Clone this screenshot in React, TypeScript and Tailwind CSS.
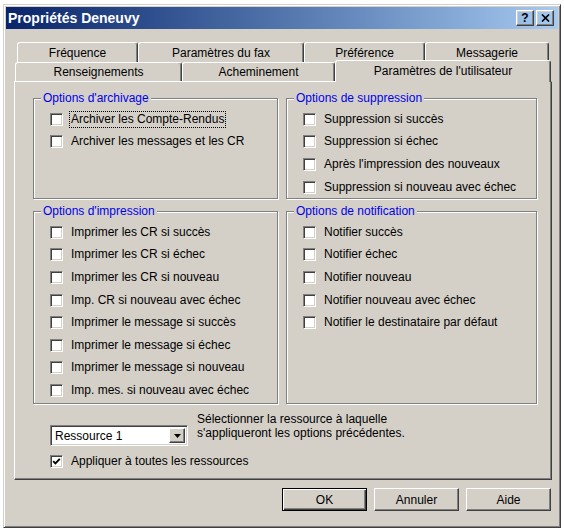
import React from 'react';

const raised =
  'border border-t-white border-l-white border-r-[#404040] border-b-[#404040] shadow-[inset_-1px_-1px_0_#808080,inset_1px_1px_0_#d4d0c8]';

function Box({ checked }: { checked?: boolean }) {
  return (
    <span className="w-[13px] h-[13px] shrink-0 bg-white border border-t-[#808080] border-l-[#808080] border-r-white border-b-white shadow-[inset_1px_1px_0_#404040,inset_-1px_-1px_0_#d4d0c8] flex items-center justify-center">
      {checked && (
        <svg width="9" height="9" viewBox="0 0 9 9">
          <path d="M1.2 4.2 L3.4 6.4 L7.8 1.8" fill="none" stroke="#000" strokeWidth="1.9" />
        </svg>
      )}
    </span>
  );
}

function Check({ label, checked, focus }: { label: string; checked?: boolean; focus?: boolean }) {
  return (
    <div className="h-[22.6px] flex items-center">
      <Box checked={checked} />
      <span
        className={
          'ml-[7px] px-[1px] leading-[15px] ' + (focus ? 'outline outline-1 outline-dotted outline-black' : '')
        }
      >
        {label}
      </span>
    </div>
  );
}

function Group({ title, className, children }: { title: string; className: string; children: React.ReactNode }) {
  return (
    <div
      className={
        'relative border border-[#808080] shadow-[inset_1px_1px_0_#fff,1px_1px_0_#fff] pl-[16px] pt-[9px] ' + className
      }
    >
      <span className="absolute left-[7px] top-[-8px] px-[2px] bg-[#d4d0c8] text-[#0000ee] leading-[14px]">
        {title}
      </span>
      {children}
    </div>
  );
}

function Tab({ label, width, className = '' }: { label: string; width: string; className?: string }) {
  return (
    <div
      className={
        'flex items-center justify-center bg-[#d4d0c8] border-t border-l border-r border-t-white border-l-white border-r-[#404040] shadow-[inset_-1px_0_0_#808080] rounded-t-[3px] ' +
        width +
        ' ' +
        className
      }
    >
      {label}
    </div>
  );
}

function Button({ label, isDefault }: { label: string; isDefault?: boolean }) {
  return (
    <div
      className={
        'w-[85px] h-[23px] flex items-center justify-center ' +
        (isDefault
          ? 'border border-black shadow-[inset_1px_1px_0_#fff,inset_-1px_-1px_0_#404040,inset_-2px_-2px_0_#808080]'
          : raised)
      }
    >
      {label}
    </div>
  );
}

export default function App() {
  return (
    <div className="w-[564px] h-[529px] bg-white pt-[4px] pl-[3px] font-['Liberation_Sans',Arial,sans-serif] text-[12px] text-black">
      <div className="w-[558px] h-[524px] bg-[#d4d0c8] border border-t-[#d4d0c8] border-l-[#d4d0c8] border-r-[#404040] border-b-[#404040] shadow-[inset_1px_1px_0_#fff,inset_-1px_-1px_0_#808080] p-[2px]">
        {/* title bar */}
        <div className="h-[22px] flex items-center bg-linear-to-r from-[#0a246a] to-[#a6caf0] pl-[2px] pr-[4px]">
          <span className="text-white font-bold text-[14px] leading-none">Propriétés Deneuvy</span>
          <div className="ml-auto flex gap-[2px]">
            <div className={'w-[18px] h-[16px] flex items-center justify-center font-bold text-[12px] leading-none ' + raised}>
              ?
            </div>
            <div className={'w-[18px] h-[16px] flex items-center justify-center ' + raised}>
              <svg width="9" height="8" viewBox="0 0 9 8">
                <path d="M1 0.5 L8 7.5 M8 0.5 L1 7.5" stroke="#000" strokeWidth="1.7" />
              </svg>
            </div>
          </div>
        </div>

        <div className="mt-[13px] ml-[8px] mr-[6px]">
          {/* back row of tabs */}
          <div className="flex h-[20px] ml-[3px]">
            <Tab label="Fréquence" width="w-[121px]" />
            <Tab label="Paramètres du fax" width="w-[166px]" />
            <Tab label="Préférence" width="w-[121px]" />
            <Tab label="Messagerie" width="w-[124px]" />
          </div>
          {/* front row of tabs */}
          <div className="flex h-[19px] ml-[1px] items-end">
            <Tab label="Renseignements" width="w-[167px]" className="h-[19px]" />
            <Tab label="Acheminement" width="w-[153px]" className="h-[19px]" />
            <Tab label="Paramètres de l'utilisateur" width="w-[216px]" className="relative z-10 h-[22px] mb-[-1px] pb-[2px]" />
          </div>

          {/* tab panel */}
          <div className="h-[399px] border border-t-white border-l-white border-r-[#404040] border-b-[#404040] shadow-[inset_-1px_-1px_0_#808080] pt-[16px] pl-[18px]">
            <div className="flex gap-[8px]">
              <Group title="Options d'archivage" className="w-[245px] h-[101px]">
                <Check label="Archiver les Compte-Rendus" focus />
                <Check label="Archiver les messages et les CR" />
              </Group>
              <Group title="Options de suppression" className="w-[251px] h-[101px]">
                <Check label="Suppression si succès" />
                <Check label="Suppression si échec" />
                <Check label="Après l'impression des nouveaux" />
                <Check label="Suppression si nouveau avec échec" />
              </Group>
            </div>
            <div className="flex gap-[8px] mt-[12px]">
              <Group title="Options d'impression" className="w-[245px] h-[193px]">
                <Check label="Imprimer les CR si succès" />
                <Check label="Imprimer les CR si échec" />
                <Check label="Imprimer les CR si nouveau" />
                <Check label="Imp. CR si nouveau avec échec" />
                <Check label="Imprimer le message si succès" />
                <Check label="Imprimer le message si échec" />
                <Check label="Imprimer le message si nouveau" />
                <Check label="Imp. mes. si nouveau avec échec" />
              </Group>
              <Group title="Options de notification" className="w-[251px] h-[193px]">
                <Check label="Notifier succès" />
                <Check label="Notifier échec" />
                <Check label="Notifier nouveau" />
                <Check label="Notifier nouveau avec échec" />
                <Check label="Notifier le destinataire par défaut" />
              </Group>
            </div>

            {/* resource selector */}
            <div className="flex items-start mt-[8px] ml-[17px]">
              <div className="mt-[13px] w-[138px] h-[21px] bg-white flex items-center border border-t-[#808080] border-l-[#808080] border-r-white border-b-white shadow-[inset_1px_1px_0_#404040,inset_-1px_-1px_0_#d4d0c8] p-[2px]">
                <span className="pl-[2px] flex-1">Ressource 1</span>
                <div className={'w-[16px] h-[15px] flex items-center justify-center bg-[#d4d0c8] ' + raised}>
                  <svg width="7" height="4" viewBox="0 0 7 4">
                    <path d="M0 0 H7 L3.5 4 Z" fill="#000" />
                  </svg>
                </div>
              </div>
              <div className="ml-[9px] leading-[14px]">
                <div>Sélectionner la ressource à laquelle</div>
                <div>s'appliqueront les options précédentes.</div>
              </div>
            </div>
            <div className="ml-[17px] mt-[7px] h-[16px] flex items-center">
              <Box checked />
              <span className="ml-[8px]">Appliquer à toutes les ressources</span>
            </div>
          </div>

          {/* buttons */}
          <div className="flex justify-end gap-[7px] mt-[8px] pr-[1px]">
            <Button label="OK" isDefault />
            <Button label="Annuler" />
            <Button label="Aide" />
          </div>
        </div>
      </div>
    </div>
  );
}
